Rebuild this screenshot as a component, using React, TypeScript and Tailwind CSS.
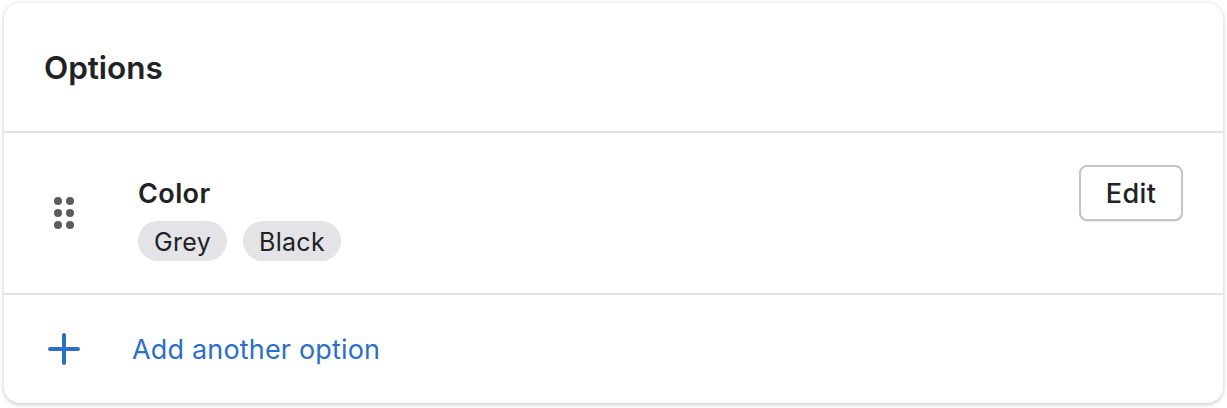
import { useState } from 'react';

interface ProductOption {
  name: string;
  values: string[];
}

const initialOptions: ProductOption[] = [{ name: 'Color', values: ['Grey', 'Black'] }];

function DragHandle() {
  return (
    <svg width="20" height="32" viewBox="0 0 20 32" fill="#5c5c5e">
      {[4, 16, 28].map(cy => (
        <g key={cy}>
          <circle cx="4" cy={cy} r="4" />
          <circle cx="16" cy={cy} r="4" />
        </g>
      ))}
    </svg>
  );
}

function PlusIcon() {
  return (
    <svg width="32" height="32" viewBox="0 0 32 32" fill="none" stroke="#2c6ecb" strokeWidth="4" strokeLinecap="round">
      <path d="M16 2v28M2 16h28" />
    </svg>
  );
}

function OptionRow({ option }: { option: ProductOption }) {
  return (
    <div className="flex h-[162px] items-start border-b-2 border-[#e1e3e5] pr-10 pl-[50px]">
      <div className="mt-16 w-[84px] shrink-0">
        <DragHandle />
      </div>
      <div className="mt-10 flex-1">
        <h3 className="h-10 pt-px text-[27px] leading-10 font-semibold tracking-[0.4px]">{option.name}</h3>
        <div className="mt-2 flex gap-4">
          {option.values.map(value => (
            <span
              key={value}
              className="h-10 rounded-full bg-[#e4e4e8] px-4 pt-px text-[25px] leading-10 tracking-[0.3px] whitespace-nowrap"
            >
              {value}
            </span>
          ))}
        </div>
      </div>
      <button className="mt-8 h-14 w-[104px] rounded-lg border-2 border-[#c2c4c6] bg-white pt-0.5 text-[27px] font-medium tracking-[0.4px] shadow-[0_1px_1px_rgba(0,0,0,0.08)]">
        Edit
      </button>
    </div>
  );
}

export default function App() {
  const [options] = useState<ProductOption[]>(initialOptions);

  return (
    <div className="h-[408px] bg-white px-1 pt-[3px] font-['Inter',sans-serif] text-[#202223]">
      <div className="h-[400px] w-[1219px] rounded-2xl bg-white shadow-[0_0_4px_1px_rgba(23,24,24,0.07),0_2px_4px_rgba(0,0,0,0.15)]">
        <div className="flex h-[130px] items-center border-b-2 border-[#e1e3e5] px-10">
          <h2 className="pt-px text-[31.5px] leading-10 font-semibold tracking-[-0.05px]">Options</h2>
        </div>

        {options.map(option => (
          <OptionRow key={option.name} option={option} />
        ))}

        <button className="flex h-[108px] items-center pl-11 text-[27px] tracking-[0.17px] text-[#2c6ecb]">
          <PlusIcon />
          <span className="ml-[52px] pt-[3px]">Add another option</span>
        </button>
      </div>
    </div>
  );
}
